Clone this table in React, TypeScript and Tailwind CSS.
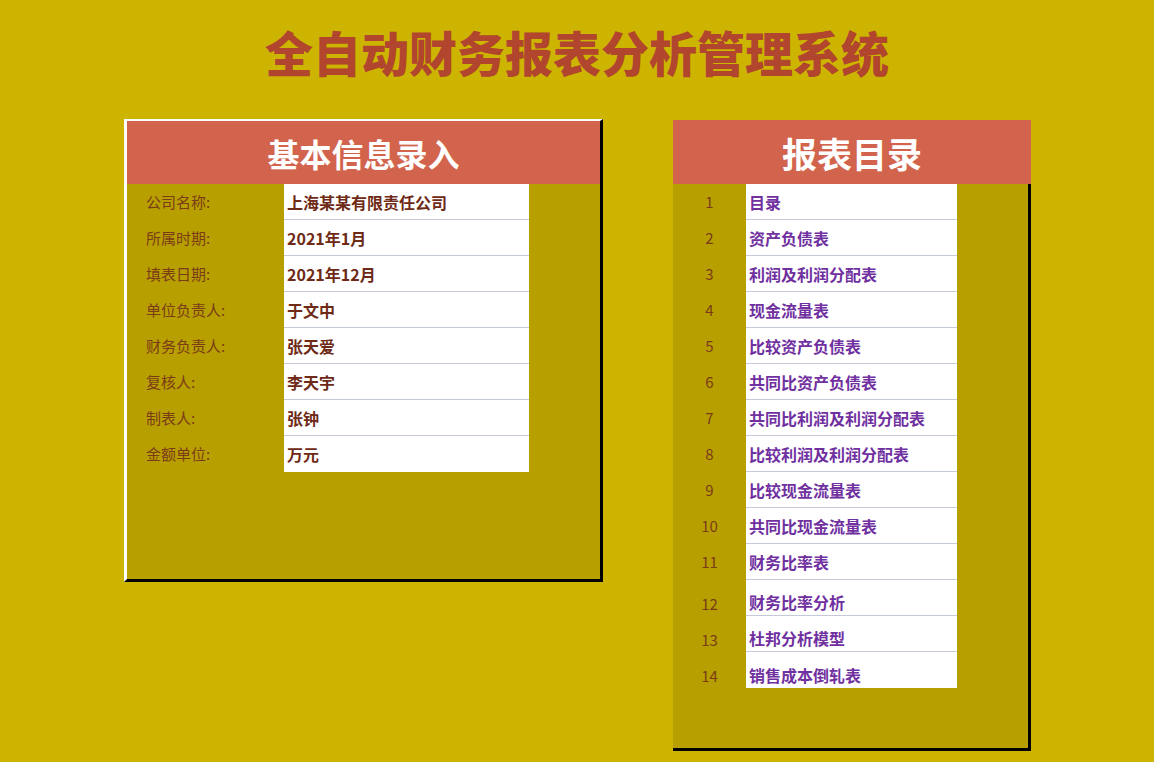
const infoRows = [
  { label: "公司名称:", value: "上海某某有限责任公司" },
  { label: "所属时期:", value: "2021年1月" },
  { label: "填表日期:", value: "2021年12月" },
  { label: "单位负责人:", value: "于文中" },
  { label: "财务负责人:", value: "张天爱" },
  { label: "复核人:", value: "李天宇" },
  { label: "制表人:", value: "张钟" },
  { label: "金额单位:", value: "万元" },
];

const reports = [
  "目录",
  "资产负债表",
  "利润及利润分配表",
  "现金流量表",
  "比较资产负债表",
  "共同比资产负债表",
  "共同比利润及利润分配表",
  "比较利润及利润分配表",
  "比较现金流量表",
  "共同比现金流量表",
  "财务比率表",
  "财务比率分析",
  "杜邦分析模型",
  "销售成本倒轧表",
];

export default function App() {
  return (
    <div
      className="w-full h-[762px] bg-[#CDB400] overflow-hidden"
      style={{ fontFamily: '"Noto Sans CJK SC", "Noto Sans", sans-serif' }}
    >
      {/* 标题 */}
      <div className="h-[119px] pt-[21px]">
        <h1 className="text-center text-[48px] leading-[60px] font-black text-[#B1452E]">
          全自动财务报表分析管理系统
        </h1>
      </div>

      <div className="flex items-start ml-[124px] gap-[70px]">
        {/* 基本信息录入 */}
        <div className="w-[479px] h-[463px] border-l-[3px] border-t-[2px] border-r-[3px] border-b-[3px] border-l-white border-t-white border-r-black border-b-black bg-[#B89F00] flex flex-col">
          <div className="h-[63px] bg-[#D2644D] flex items-center justify-center">
            <span className="text-white text-[32px] font-bold leading-none">基本信息录入</span>
          </div>
          <div className="flex flex-col">
            {infoRows.map((row, i) => (
              <div key={row.label} className="flex h-[36px]">
                <div className="w-[157px] pl-[19px] flex items-center text-[15px] text-[#7A3C17]">
                  {row.label}
                </div>
                <div
                  className={
                    "w-[245px] bg-white pl-[3px] flex items-center text-[16px] font-bold text-[#6E2A16] " +
                    (i < infoRows.length - 1 ? "border-b border-[#C5CAD8]" : "")
                  }
                >
                  {row.value}
                </div>
              </div>
            ))}
          </div>
        </div>

        {/* 报表目录 */}
        <div className="w-[358px] flex flex-col mt-[1px]">
          <div className="h-[64px] bg-[#D2644D] flex items-center justify-center">
            <span className="text-white text-[35px] font-bold leading-none">报表目录</span>
          </div>
          <div className="h-[567px] bg-[#B89F00] border-r-[3px] border-b-[3px] border-black">
            {reports.map((name, i) => {
              const low = i >= 11;
              return (
                <div key={name} className="flex h-[36px]">
                  <div
                    className={
                      "w-[73px] flex justify-center text-[15px] text-[#7A3C17] " +
                      (low ? "items-end pb-[1px]" : "items-center")
                    }
                  >
                    {i + 1}
                  </div>
                  <div
                    className={
                      "w-[211px] bg-white pl-[3px] flex text-[16px] font-bold text-[#7030A0] " +
                      (low ? "items-end pb-[1px] " : "items-center ") +
                      (i < reports.length - 1 ? "border-b border-[#C5CAD8]" : "")
                    }
                  >
                    {name}
                  </div>
                </div>
              );
            })}
          </div>
        </div>
      </div>
    </div>
  );
}
